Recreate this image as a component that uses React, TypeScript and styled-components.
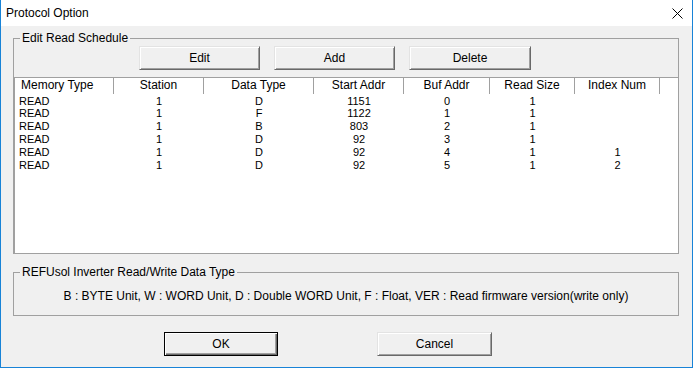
import React from 'react'
import styled, { createGlobalStyle } from 'styled-components'

const GlobalStyle = createGlobalStyle`
  html, body {
    margin: 0;
    padding: 0;
    background: #ffffff;
  }
  body {
    font-family: "Liberation Sans", Arial, sans-serif;
    font-size: 12px;
    color: #000;
  }
`

const Window = styled.div`
  width: 693px;
  height: 368px;
  box-sizing: border-box;
  border: 1px solid #1883d7;
  border-top: none;
  background: #f0f0f0;
  display: flex;
  flex-direction: column;
`
const TitleBar = styled.div`
  height: 26px;
  flex: none;
  background: #ffffff;
  display: flex;
  align-items: center;
  justify-content: space-between;
  padding: 0 9px 0 5px;
  font-size: 12px;
`
const TitleText = styled.span`
  line-height: 14px;
  padding-bottom: 1px;
`
const Body = styled.div`
  flex: 1;
  padding: 5px 13px 11px 12px;
  display: flex;
  flex-direction: column;
`
const Group = styled.fieldset<{ gap?: number }>`
  margin: ${(p) => p.gap || 0}px 0 0 0;
  padding: 0;
  border: 1px solid #a0a0a0;
  min-width: 0;
`
const Legend = styled.legend`
  margin-left: 6px;
  padding: 0 2px;
  line-height: 15px;
  font-size: 12px;
`
const ButtonRow = styled.div<{ left: number, gap: number }>`
  display: flex;
  gap: ${(p) => p.gap}px;
  padding-left: ${(p) => p.left}px;
`
const Button = styled.button<{ w: number, primary?: boolean }>`
  width: ${(p) => p.w}px;
  height: 24px;
  box-sizing: border-box;
  padding: 0;
  margin: 0;
  font-family: "Liberation Sans", Arial, sans-serif;
  font-size: 12px;
  color: #000;
  background: #f0f0f0;
  border: 1px solid;
  border-color: ${(p) => (p.primary ? '#000 #000 #000 #000' : '#e3e3e3 #696969 #696969 #e3e3e3')};
  box-shadow: ${(p) => (p.primary
    ? 'inset 1px 1px 0 #ffffff, inset -1px -1px 0 #696969, inset -2px -2px 0 #a0a0a0'
    : 'inset 1px 1px 0 #ffffff, inset -1px -1px 0 #a0a0a0')};
`
const List = styled.div`
  margin-top: 7px;
  height: 176px;
  box-sizing: border-box;
  background: #ffffff;
  border-top: 1px solid #a0a0a0;
  border-left: 1px solid #a0a0a0;
`
const Cols = '99px 90px 110px 90px 86px 85px 85px 1fr'
const HeaderRow = styled.div`
  display: grid;
  grid-template-columns: ${Cols};
  height: 16px;
`
const HeaderCell = styled.div<{ first?: boolean, last?: boolean }>`
  border-right: ${(p) => (p.last ? 'none' : '1px solid #a0a0a0')};
  text-align: ${(p) => (p.first ? 'left' : 'center')};
  padding-left: ${(p) => (p.first ? 6 : 0)}px;
  line-height: 15px;
  font-size: 12px;
  white-space: nowrap;
  overflow: hidden;
`
const DataRow = styled.div`
  display: grid;
  grid-template-columns: ${Cols};
  height: 12.33px;
  line-height: 12.33px;
  font-size: 11px;
  padding-top: 0.5px;
`
const DataCell = styled.div<{ first?: boolean }>`
  text-align: ${(p) => (p.first ? 'left' : 'center')};
  padding-left: ${(p) => (p.first ? 4 : 0)}px;
  white-space: nowrap;
`
const InfoText = styled.div`
  padding: 9px 0 12px;
  line-height: 14px;
  text-align: center;
  font-size: 12px;
`
const FooterRow = styled(ButtonRow)`
  margin-top: 16px;
`

const CloseIcon = () => (
  <svg width="11" height="11" viewBox="0 0 11 11">
    <path d="M0.5 0.5 L10.5 10.5 M10.5 0.5 L0.5 10.5" stroke="#000" strokeWidth="1" />
  </svg>
)

const headers = ['Memory Type', 'Station', 'Data Type', 'Start Addr', 'Buf Addr', 'Read Size', 'Index Num', '']
const rows = [
  ['READ', '1', 'D', '1151', '0', '1', ''],
  ['READ', '1', 'F', '1122', '1', '1', ''],
  ['READ', '1', 'B', '803', '2', '1', ''],
  ['READ', '1', 'D', '92', '3', '1', ''],
  ['READ', '1', 'D', '92', '4', '1', '1'],
  ['READ', '1', 'D', '92', '5', '1', '2'],
]

export default function App() {
  return (
    <>
      <GlobalStyle />
      <Window>
        <TitleBar>
          <TitleText>Protocol Option</TitleText>
          <CloseIcon />
        </TitleBar>
        <Body>
          <Group>
            <Legend>Edit Read Schedule</Legend>
            <ButtonRow left={125} gap={14}>
              <Button w={121}>Edit</Button>
              <Button w={121}>Add</Button>
              <Button w={122}>Delete</Button>
            </ButtonRow>
            <List>
              <HeaderRow>
                {headers.map((h, i) => (
                  <HeaderCell key={i} first={i === 0} last={i === headers.length - 1}>{h}</HeaderCell>
                ))}
              </HeaderRow>
              {rows.map((r, ri) => (
                <DataRow key={ri}>
                  {r.map((c, ci) => (
                    <DataCell key={ci} first={ci === 0}>{c}</DataCell>
                  ))}
                </DataRow>
              ))}
            </List>
          </Group>
          <Group gap={11}>
            <Legend>REFUsol Inverter Read/Write Data Type</Legend>
            <InfoText>B : BYTE Unit, W : WORD Unit, D : Double WORD Unit, F : Float, VER : Read firmware version(write only)</InfoText>
          </Group>
          <FooterRow left={151} gap={99}>
            <Button w={114} primary>OK</Button>
            <Button w={115}>Cancel</Button>
          </FooterRow>
        </Body>
      </Window>
    </>
  )
}
